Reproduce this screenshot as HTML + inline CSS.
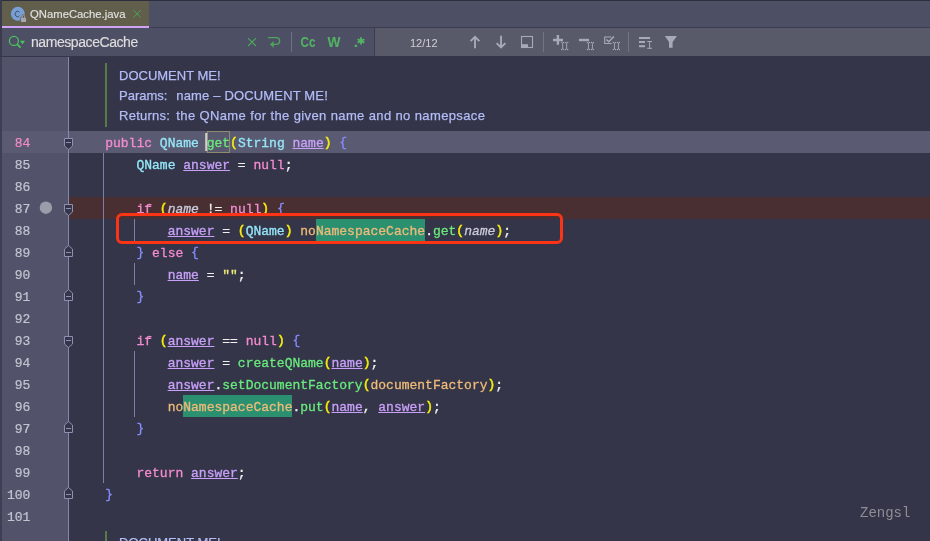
<!DOCTYPE html>
<html><head><meta charset="utf-8">
<style>
*{margin:0;padding:0;box-sizing:border-box}
html,body{width:930px;height:541px;overflow:hidden;background:#343548}
body{position:relative;font-family:"Liberation Sans",sans-serif}
.code,.ln,.doc,.a{will-change:transform}
.a{position:absolute}
#topstrip{left:0;top:0;width:930px;height:1px;background:#2e2f3e}
#leftstrip{left:0;top:0;width:2px;height:57px;background:#3a3b4d}
#header{left:2px;top:1px;width:928px;height:26px;background:#4d4f65}
#hdrline{left:2px;top:27px;width:928px;height:1px;background:#3b3c4f}
#tab{left:2px;top:1px;width:147px;height:25px;background:#625e4c}
#tabline{left:2px;top:26px;width:147px;height:2px;background:#d0a3f6}
#search{left:2px;top:28px;width:373px;height:28px;background:#4d4f65}
#searchdiv{left:374px;top:28px;width:1px;height:28px;background:#3b3c4f}
#search2{left:375px;top:28px;width:555px;height:28px;background:#585a6a}
#srchline{left:0;top:56px;width:930px;height:1px;background:#35364a}
#gutter{left:2px;top:57px;width:66px;height:484px;background:#52536b}
#gleft{left:0;top:57px;width:2px;height:484px;background:#3e3f52}
#gline{left:68px;top:57px;width:1px;height:484px;background:#8587ad}
.row{position:absolute;left:0;width:930px;height:22px}
.ln{position:absolute;left:0;padding-top:2px;-webkit-text-stroke:0.2px currentColor;width:30.4px;text-align:right;font-family:"Liberation Mono",monospace;font-size:13px;line-height:22px;color:#c3c4d0}
.code{position:absolute;left:74px;padding-top:2px;-webkit-text-stroke:0.3px currentColor;font-family:"Liberation Mono",monospace;font-size:13px;line-height:22px;white-space:pre;color:#f0f0f0}
.kw{color:#f48bd0}
.cls{color:#95e6f8}
.fn{color:#69ea7d}
.lv{color:#c8a0f8;text-decoration:underline;text-underline-offset:1px}
.pm{color:#cbcbdb;font-style:italic}
.pr{color:#f4ec10;position:relative;top:-1px;-webkit-text-stroke:0.5px currentColor}
.br{color:#868cfa;position:relative;top:-1px}
.fld{color:#eebb79}
.hl{}
.str{color:#efe97e}
.guide{position:absolute;width:1px;background:#7d7fa3}
.doc{position:absolute;left:119px;padding-top:2px;-webkit-text-stroke:0.25px currentColor;font-size:13px;color:#b3bcf7;white-space:pre}
.lbl{display:inline-block;width:57.3px}
</style></head><body>
<div class="a" id="topstrip"></div>
<div class="a" id="header"></div>
<div class="a" id="hdrline"></div>
<div class="a" id="tab"></div>
<div class="a" id="tabline"></div>
<div class="a" id="leftstrip"></div>
<div class="a" id="search"></div>
<div class="a" id="searchdiv"></div>
<div class="a" id="search2"></div>
<div class="a" id="srchline"></div>
<div class="a" id="gutter"></div>
<div class="a" id="gleft"></div>

<!-- row highlights -->
<div class="a" style="left:2px;top:131px;width:928px;height:22px;background:#5a5b72"></div>
<div class="a" style="left:69px;top:197px;width:861px;height:22px;background:#4a2f32"></div>
<div class="a" id="gline"></div>

<!-- tab text -->
<div class="a" style="left:30px;top:4px;font-size:11.3px;line-height:20px;color:#e0e0e0;-webkit-text-stroke:0.15px currentColor">QNameCache.java</div>
<!-- search text -->
<div class="a" style="left:31px;top:32px;font-size:14px;letter-spacing:-0.43px;line-height:20px;color:#dedede;-webkit-text-stroke:0.15px currentColor">namespaceCache</div>
<div class="a" style="left:410px;top:34px;font-size:11px;line-height:18px;color:#d0d0d6">12/12</div>

<!-- doc -->
<div class="a" style="left:105px;top:63px;width:2px;height:64px;background:#5a7a45"></div>
<div class="doc" style="top:64px;line-height:20px">DOCUMENT ME!</div>
<div class="doc" style="top:84px;line-height:20px"><span class="lbl">Params:</span><span style="letter-spacing:0.16px">name – DOCUMENT ME!</span></div>
<div class="doc" style="top:104px;line-height:20px"><span class="lbl" style="letter-spacing:0.26px">Returns:</span><span style="letter-spacing:0.38px">the QName for the given name and no namepsace</span></div>

<div class="a" style="left:105px;top:531px;width:2px;height:20px;background:#5a7a45"></div>
<div class="doc" style="top:531px;line-height:20px">DOCUMENT ME!</div>

<div class="a" style="left:316px;top:219px;width:109.2px;height:22px;background:#2a9070"></div>
<div class="a" style="left:183.4px;top:395px;width:109.2px;height:22px;background:#2a9070"></div>
<div class="a" style="left:207px;top:131px;width:23px;height:22px;background:#57586d;border:1px solid #8f8a70"></div>
<!-- guides -->
<div class="guide" style="left:103px;top:153px;height:330px"></div>
<div class="guide" style="left:134px;top:219px;height:22px"></div>
<div class="guide" style="left:134px;top:263px;height:22px"></div>
<div class="guide" style="left:134px;top:351px;height:66px"></div>

<!-- line numbers -->
<div class="ln" style="top:131px;color:#f28cc8">84</div>
<div class="ln" style="top:153px">85</div>
<div class="ln" style="top:175px">86</div>
<div class="ln" style="top:197px">87</div>
<div class="ln" style="top:219px">88</div>
<div class="ln" style="top:241px">89</div>
<div class="ln" style="top:263px">90</div>
<div class="ln" style="top:285px">91</div>
<div class="ln" style="top:307px">92</div>
<div class="ln" style="top:329px">93</div>
<div class="ln" style="top:351px">94</div>
<div class="ln" style="top:373px">95</div>
<div class="ln" style="top:395px">96</div>
<div class="ln" style="top:417px">97</div>
<div class="ln" style="top:439px">98</div>
<div class="ln" style="top:461px">99</div>
<div class="ln" style="top:483px">100</div>
<div class="ln" style="top:505px">101</div>

<!-- code -->
<div class="code" style="top:131px">    <span class="kw">public</span> <span class="cls">QName</span> <span class="fn">get</span><span class="pr">(</span><span class="cls">String</span> <span class="lv">name</span><span class="pr">)</span> <span class="br">{</span></div>
<div class="code" style="top:153px">        <span class="cls">QName</span> <span class="lv">answer</span> = <span class="kw">null</span>;</div>
<div class="code" style="top:197px">        <span class="kw">if</span> <span class="pr">(</span><span class="pm">name</span> != <span class="kw">null</span><span class="pr">)</span> <span class="br">{</span></div>
<div class="code" style="top:219px">            <span class="lv">answer</span> = <span class="pr">(</span><span class="cls">QName</span><span class="pr">)</span> <span class="fld">no<span class="hl">NamespaceCache</span></span>.<span class="fn">get</span><span class="pr">(</span><span class="pm">name</span><span class="pr">)</span>;</div>
<div class="code" style="top:241px">        <span class="br">}</span> <span class="kw">else</span> <span class="br">{</span></div>
<div class="code" style="top:263px">            <span class="lv">name</span> = <span class="str">""</span>;</div>
<div class="code" style="top:285px">        <span class="br">}</span></div>
<div class="code" style="top:329px">        <span class="kw">if</span> <span class="pr">(</span><span class="lv">answer</span> == <span class="kw">null</span><span class="pr">)</span> <span class="br">{</span></div>
<div class="code" style="top:351px">            <span class="lv">answer</span> = <span class="fn">createQName</span><span class="pr">(</span><span class="lv">name</span><span class="pr">)</span>;</div>
<div class="code" style="top:373px">            <span class="lv">answer</span>.<span class="fn">setDocumentFactory</span><span class="pr">(</span><span class="fld">documentFactory</span><span class="pr">)</span>;</div>
<div class="code" style="top:395px">            <span class="fld">no<span class="hl">NamespaceCache</span></span>.<span class="fn">put</span><span class="pr">(</span><span class="lv">name</span>, <span class="lv">answer</span><span class="pr">)</span>;</div>
<div class="code" style="top:417px">        <span class="br">}</span></div>
<div class="code" style="top:461px">        <span class="kw">return</span> <span class="lv">answer</span>;</div>
<div class="code" style="top:483px">    <span class="br">}</span></div>

<!-- red box -->
<div class="a" style="left:116px;top:213px;width:447px;height:31px;border:3px solid #fb3416;border-radius:6px"></div>


<svg class="a" style="left:0;top:0" width="930" height="541" viewBox="0 0 930 541">
<!-- tab icon -->
<circle cx="17.85" cy="13.85" r="7" fill="#78a0d6"/>
<path d="M19.4 12.2 A2.4 2.8 0 1 0 19.4 15.8" fill="none" stroke="#434962" stroke-width="0.95"/>
<path d="M20.3 23 V17.2 H21.6 V16.1 A1.9 1.9 0 0 1 25.4 16.1 V17.2 H26.8 V23 Z" fill="#625e4c"/>
<rect x="21.00" y="17.8" width="5.1" height="4.2" fill="#a6a7b3"/>
<path d="M22.4 17.8 V16.3 A1.1 1.1 0 0 1 24.6 16.3 V17.8" fill="none" stroke="#a6a7b3" stroke-width="1"/>
<!-- tab close -->
<path d="M133.3 10.1 L140.9 17.7 M140.9 10.1 L133.3 17.7" stroke="#4aa256" stroke-width="1"/>
<!-- search icon -->
<circle cx="13.9" cy="40.9" r="4.5" fill="none" stroke="#4cc45e" stroke-width="1.25"/>
<path d="M17 44.1 L20.6 47.6" stroke="#4cc45e" stroke-width="1.7"/>
<path d="M20 40.7 H25 L22.5 44.2 Z" fill="#4cc45e"/>
<!-- clear x -->
<path d="M248 38.2 L256 46 M256 38.2 L248 46" stroke="#4ea65c" stroke-width="1.1"/>
<!-- return icon -->
<path d="M268 37.6 H276.2 A3.4 3.4 0 0 1 276.2 44.4 H272" fill="none" stroke="#4ea65c" stroke-width="1.4"/>
<path d="M270 44.4 L273.6 41 V47.8 Z" fill="#4ea65c"/>
<!-- separators -->
<rect x="291.00" y="32" width="1" height="20" fill="#6f7084"/>
<rect x="543.00" y="32" width="1" height="20" fill="#727384"/>
<rect x="628.00" y="32" width="1" height="20" fill="#727384"/>
<!-- up arrow -->
<path d="M475 36.5 V48.2 M470.6 41.2 L475 36.8 L479.4 41.2" fill="none" stroke="#a8a9b8" stroke-width="1.9"/>
<!-- down arrow -->
<path d="M501 35.8 V47.5 M496.6 43.1 L501 47.5 L505.4 43.1" fill="none" stroke="#a8a9b8" stroke-width="1.9"/>
<!-- box -->
<rect x="521.50" y="36.5" width="11" height="11" fill="none" stroke="#a8a9b8" stroke-width="1.1"/>
<rect x="521.00" y="44.2" width="7" height="3.8" fill="#a8a9b8"/>
<!-- plus II -->
<path d="M553 40 H563 M557.9 35 V44.8" stroke="#a8a9b8" stroke-width="2.4"/>
<!-- minus II -->
<path d="M579 40 H589" stroke="#a8a9b8" stroke-width="2.4"/>
<!-- checkbox -->
<path d="M611.5 37 H604.7 V43.5 H611.7" fill="none" stroke="#a8a9b8" stroke-width="1.1"/>
<path d="M606.4 39.4 L608.8 41.8 L614 36.6" fill="none" stroke="#a8a9b8" stroke-width="1.4"/>
<!-- lines icon -->
<rect x="639.00" y="37" width="11" height="2" fill="#a8a9b8"/>
<rect x="639.00" y="41" width="6" height="2" fill="#a8a9b8"/>
<rect x="639.00" y="45.2" width="6" height="2" fill="#a8a9b8"/>
<path d="M647.2 41.5 H652 M649.6 41.5 V48.3 M647.2 48.3 H652" fill="none" stroke="#a8a9b8" stroke-width="1"/>
<!-- filter -->
<path d="M664.8 36 H677 L672.6 42 V47.8 H669 V42 Z" fill="#a8a9b8"/>
<path d="M64.5 138.5 H72.5 V146 L68.5 149.5 L64.5 146 Z" fill="#35364a" stroke="#8d8fb3" stroke-width="1"/><path d="M66 142.5 H71" stroke="#8d8fb3" stroke-width="1"/><path d="M64.5 204.5 H72.5 V212 L68.5 215.5 L64.5 212 Z" fill="#35364a" stroke="#8d8fb3" stroke-width="1"/><path d="M66 208.5 H71" stroke="#8d8fb3" stroke-width="1"/><path d="M64.5 336.5 H72.5 V344 L68.5 347.5 L64.5 344 Z" fill="#35364a" stroke="#8d8fb3" stroke-width="1"/><path d="M66 340.5 H71" stroke="#8d8fb3" stroke-width="1"/><path d="M68.5 245.5 L72.5 249 V256.5 H64.5 V249 Z" fill="#35364a" stroke="#8d8fb3" stroke-width="1"/><path d="M66 252.5 H71" stroke="#8d8fb3" stroke-width="1"/><path d="M68.5 289.5 L72.5 293 V300.5 H64.5 V293 Z" fill="#35364a" stroke="#8d8fb3" stroke-width="1"/><path d="M66 296.5 H71" stroke="#8d8fb3" stroke-width="1"/><path d="M68.5 421.5 L72.5 425 V432.5 H64.5 V425 Z" fill="#35364a" stroke="#8d8fb3" stroke-width="1"/><path d="M66 428.5 H71" stroke="#8d8fb3" stroke-width="1"/><path d="M68.5 487.5 L72.5 491 V498.5 H64.5 V491 Z" fill="#35364a" stroke="#8d8fb3" stroke-width="1"/><path d="M66 494.5 H71" stroke="#8d8fb3" stroke-width="1"/><text x="300.6" y="46.9" font-family="Liberation Sans" font-weight="bold" font-size="13.8" textLength="15" lengthAdjust="spacingAndGlyphs" fill="#52b462">Cc</text><text x="327.5" y="46.9" font-family="Liberation Sans" font-weight="bold" font-size="13.8" textLength="13" lengthAdjust="spacingAndGlyphs" fill="#52b462">W</text><rect x="354.70" y="44.8" width="2.4" height="2.2" fill="#52b462"/><path d="M361 37.2 V44.6 M357.6 39.2 L364.4 42.6 M357.6 42.6 L364.4 39.2" stroke="#52b462" stroke-width="1.8"/>
<rect x="561.10" y="41.9" width="1.2" height="1.2" fill="#a8a9b8"/><rect x="561.10" y="48.9" width="1.2" height="1.2" fill="#a8a9b8"/><rect x="563.10" y="41.9" width="1.2" height="1.2" fill="#a8a9b8"/><rect x="563.10" y="48.9" width="1.2" height="1.2" fill="#a8a9b8"/><rect x="562.25" y="42.8" width="0.9" height="6.4" fill="#a8a9b8"/><rect x="565.10" y="41.9" width="1.2" height="1.2" fill="#a8a9b8"/><rect x="565.10" y="48.9" width="1.2" height="1.2" fill="#a8a9b8"/><rect x="567.10" y="41.9" width="1.2" height="1.2" fill="#a8a9b8"/><rect x="567.10" y="48.9" width="1.2" height="1.2" fill="#a8a9b8"/><rect x="566.25" y="42.8" width="0.9" height="6.4" fill="#a8a9b8"/><rect x="586.80" y="41.9" width="1.2" height="1.2" fill="#a8a9b8"/><rect x="586.80" y="48.9" width="1.2" height="1.2" fill="#a8a9b8"/><rect x="588.80" y="41.9" width="1.2" height="1.2" fill="#a8a9b8"/><rect x="588.80" y="48.9" width="1.2" height="1.2" fill="#a8a9b8"/><rect x="587.95" y="42.8" width="0.9" height="6.4" fill="#a8a9b8"/><rect x="590.80" y="41.9" width="1.2" height="1.2" fill="#a8a9b8"/><rect x="590.80" y="48.9" width="1.2" height="1.2" fill="#a8a9b8"/><rect x="592.80" y="41.9" width="1.2" height="1.2" fill="#a8a9b8"/><rect x="592.80" y="48.9" width="1.2" height="1.2" fill="#a8a9b8"/><rect x="591.95" y="42.8" width="0.9" height="6.4" fill="#a8a9b8"/><rect x="612.80" y="41.9" width="1.2" height="1.2" fill="#a8a9b8"/><rect x="612.80" y="48.9" width="1.2" height="1.2" fill="#a8a9b8"/><rect x="614.80" y="41.9" width="1.2" height="1.2" fill="#a8a9b8"/><rect x="614.80" y="48.9" width="1.2" height="1.2" fill="#a8a9b8"/><rect x="613.95" y="42.8" width="0.9" height="6.4" fill="#a8a9b8"/><rect x="616.80" y="41.9" width="1.2" height="1.2" fill="#a8a9b8"/><rect x="616.80" y="48.9" width="1.2" height="1.2" fill="#a8a9b8"/><rect x="618.80" y="41.9" width="1.2" height="1.2" fill="#a8a9b8"/><rect x="618.80" y="48.9" width="1.2" height="1.2" fill="#a8a9b8"/><rect x="617.95" y="42.8" width="0.9" height="6.4" fill="#a8a9b8"/>
<!-- breakpoint -->
<circle cx="45.9" cy="207.7" r="6.2" fill="#9c9dab"/>
<!-- caret -->
<rect x="205.20" y="133" width="2" height="18" fill="#cfcfcf"/>
</svg>

<!-- watermark -->
<div class="a" style="left:859.5px;top:503.5px;font-family:'Liberation Mono',monospace;font-size:14px;line-height:18px;color:#8e8e94">Zengsl</div>
</body></html>
